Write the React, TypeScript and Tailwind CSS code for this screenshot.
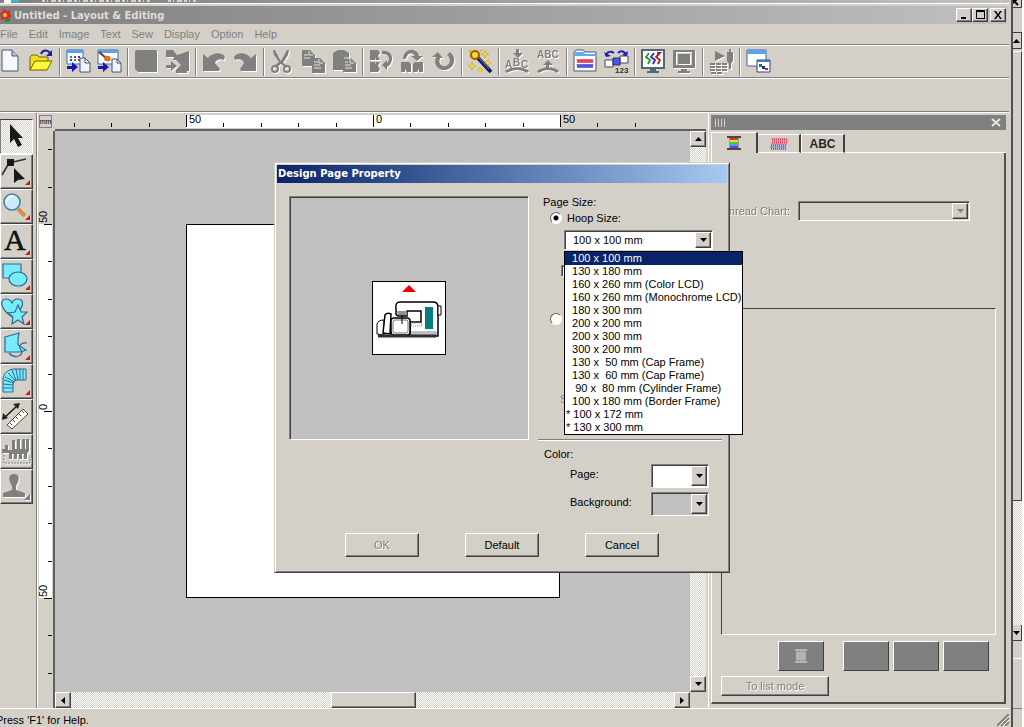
import React from 'react';

const raised =
  'border border-t-white border-l-white border-r-[#404040] border-b-[#404040] shadow-[inset_-1px_-1px_0_#808080] bg-[#d4d0c8]';
const sunken =
  'border border-t-[#808080] border-l-[#808080] border-r-white border-b-white shadow-[inset_1px_1px_0_#404040]';
const dither = 'bg-[repeating-conic-gradient(#ffffff_0_25%,#d4d0c8_0_50%)] bg-[length:2px_2px]';

const Rule = () => <div className="h-0.5 shrink-0 border-t border-[#808080] border-b border-b-white" />;

type ArrowProps = { dir: 'up' | 'down' | 'left' | 'right'; color?: string };

const arrowPoints = {
  up: '0,4 7,4 3.5,0',
  down: '0,0 7,0 3.5,4',
  left: '4,0 4,7 0,3.5',
  right: '0,0 0,7 4,3.5',
};

const Arrow = ({ dir, color = '#000' }: ArrowProps) => {
  const wide = dir === 'up' || dir === 'down';
  return (
    <svg width={wide ? 7 : 4} height={wide ? 4 : 7} aria-hidden="true">
      <polygon points={arrowPoints[dir]} fill={color} />
    </svg>
  );
};

const ScrollButton = ({ dir }: ArrowProps) => (
  <button aria-label={`Scroll ${dir}`} className={`flex h-4 w-4 shrink-0 items-center justify-center ${raised}`}>
    <Arrow dir={dir} />
  </button>
);

/* ---------- toolbar ---------- */

const colorIcons: Record<string, React.ReactNode> = {
  New: (
    <g>
      <path d="M4 1h10l6 6v15H4z" fill="#f4f8ff" stroke="#44547c" />
      <path d="M14 1v6h6" fill="#b8c4e0" stroke="#44547c" />
    </g>
  ),
  Open: (
    <g>
      <path d="M1 21V8l2-2h5l2 2h9v4" fill="#f0e020" stroke="#706000" />
      <path d="M1 21l5-9h17l-5 9z" fill="#fff838" stroke="#706000" />
      <path d="M12 5c2-5 7-4 9-1" fill="none" stroke="#2020a0" strokeWidth="2" />
      <path d="M23 1v6h-6z" fill="#2020a0" />
    </g>
  ),
  'Import Design': (
    <g>
      <path d="M1 1h16v14H1z" fill="#fff" stroke="#3868b0" />
      <path d="M1 1h16v3H1z" fill="#58a0f0" />
      <path d="M4 7h2v2H4zM8 10h2v2H8z" fill="#20a020" />
      <path d="M8 7h2v2H8zM12 10h2v2h-2z" fill="#d02020" />
      <path d="M12 7h2v2h-2zM4 10h2v2H4z" fill="#2040d0" />
      <path d="M14 9h5l5 5v9H14z" fill="#eef4ff" stroke="#44547c" />
      <path d="M19 9v5h5" fill="none" stroke="#44547c" />
      <path d="M1 17h5v-4l6 5-6 5v-3H1z" fill="#1818b0" />
    </g>
  ),
  'Import Image': (
    <g>
      <path d="M1 1h20v14H1z" fill="#fff" stroke="#3868b0" />
      <path d="M1 1h20v3H1z" fill="#58a0f0" />
      <path d="M2 3l7 6" stroke="#703010" strokeWidth="2" />
      <path d="M8 7c5-1 7 2 5 5-2 1-5 0-6-1z" fill="#e07020" />
      <path d="M15 10h5l4 4v9h-9z" fill="#eef4ff" stroke="#44547c" />
      <path d="M20 10v4h4" fill="none" stroke="#44547c" />
      <path d="M1 17h5v-4l6 5-6 5v-3H1z" fill="#1818b0" />
    </g>
  ),
  Wizard: (
    <g>
      <path d="M10 9l13 14" stroke="#181850" strokeWidth="4" />
      <path d="M11 9l10 11" stroke="#7878c8" strokeWidth="1" />
      <circle cx="7" cy="6" r="4" fill="#f8d828" stroke="#a05c00" strokeWidth="2" />
      <path
        d="M17 1l1 3 3 1-3 1-1 3-1-3-3-1 3-1zM4 13l1 3 3 1-3 1-1 3-1-3-3-1 3-1zM20 11l1 2 2 1-2 1-1 2-1-2-2-1 2-1zM12 18l1 2 2 1-2 1-1 2-1-2-2-1 2-1zM1 1h2v2H1zM12 1h2v1h-2z"
        fill="#f8e030"
        stroke="#c89800"
        strokeWidth=".5"
      />
    </g>
  ),
  'Design Library': (
    <g>
      <path d="M1 22V3l2-2h7l2 2h11v19z" fill="#fff" stroke="#405878" />
      <path d="M2 3h9l1 2h11v2H2z" fill="#60a8f0" />
      <path d="M4 10l1 4 1-4 1 4 1-4 1 4 1-4 1 4 1-4 1 4 1-4 1 4 1-4 1 4 1-4 1 4 1-4" fill="none" stroke="#e03050" />
      <path d="M4 15l1 4 1-4 1 4 1-4 1 4 1-4 1 4 1-4 1 4 1-4 1 4 1-4 1 4 1-4 1 4 1-4" fill="none" stroke="#4040d0" />
    </g>
  ),
  'Sewing Order': (
    <g>
      <path d="M2 7c1-5 5-5 8-3M14 4c3-3 7-2 8 3" fill="none" stroke="#2020b0" strokeWidth="2" />
      <path d="M0 3l2 5 5-1zM24 2l-1 6-5-2z" fill="#2020b0" />
      <path d="M1 11h8v7H1z" fill="#fff" stroke="#445" />
      <path d="M16 7h8v7h-8z" fill="#fff" stroke="#445" />
      <path d="M9 9h7v7H9z" fill="#4858e0" stroke="#223090" />
      <text x="11" y="24" fontSize="8" fontWeight="bold" fill="#303030">123</text>
    </g>
  ),
  Preview: (
    <g>
      <path d="M1 1h22v18H1z" fill="#fff" stroke="#506878" strokeWidth="2" />
      <path d="M9 20h6v2h3v2H6v-2h3z" fill="#506878" />
      <path d="M8 4l-3 4 4 3-2 4" fill="none" stroke="#18a018" strokeWidth="1.8" />
      <path d="M13 4l-3 4 4 3-2 4" fill="none" stroke="#2828c0" strokeWidth="1.8" />
      <path d="M16 4l3 0-4 4 4 3-2 4" fill="none" stroke="#c01818" strokeWidth="1.8" />
    </g>
  ),
  'Reference Window': (
    <g>
      <path d="M1 1h19v16H1z" fill="#fff" stroke="#3868a8" />
      <path d="M1 1h19v4H1z" fill="#60a0f0" />
      <path d="M11 11h13v12H11z" fill="#fff" stroke="#304878" />
      <path d="M11 11h13v2H11z" fill="#4078c8" />
      <path d="M13 15h3v3h-3z" fill="#109010" />
      <path d="M16 17h3v3h-3z" fill="#2020b0" />
      <path d="M19 19h3v2h-3z" fill="#c02020" />
    </g>
  ),
};

const grayIcons: Record<string, React.ReactNode> = {
  Save: <path d="M1 2l2-1h19l1 1v21H4l-3-3z" />,
  'Write to Card': (
    <path d="M1 1h7l4 5 12-4v20h-2v2H11v-3l5-5-5-5H8l1-3H3L1 8zM1 16h5v-4l6 5-6 5v-3H1z" />
  ),
  Undo: <path d="M1 5l5 4c5-6 14-6 17-1l-1 3c-4-2-8 0-9 3l5 6-1 2H1z" />,
  Redo: <path d="M23 5l-5 4C13 3 4 3 1 8l1 3c4-2 8 0 9 3l-4 6 1 2h15z" />,
  Cut: (
    <g>
      <path d="M3 1l2 0 6 11 6-11h2l-1 5-5 8 5 3-2 2-5-4-5 4-2-2 5-4-5-7z" />
      <circle cx="5" cy="20" r="3" fill="none" stroke="#808080" strokeWidth="2" />
      <circle cx="17" cy="20" r="3" fill="none" stroke="#808080" strokeWidth="2" />
    </g>
  ),
  Copy: (
    <g>
      <path d="M1 1h8l5 5v11H1zM11 9h8l5 5v10H11z" />
      <path d="M3 6h4M3 9h6M8 2v4h4M13 13h4M13 16h6M13 19h7M18 10v4h4" stroke="#e8e6e0" fill="none" />
    </g>
  ),
  Paste: (
    <g>
      <path d="M1 4l5-3h6l5 3v5h2l5 5v9H11v-2H1z" />
      <path d="M12 9h6v5h4M13 13h3M13 16h6M13 19h7" stroke="#e8e6e0" fill="none" />
    </g>
  ),
  'Flip Vertical': (
    <g>
      <path d="M1 1h8l2 3-2 3 2 4H7L6 8v3H1zM1 13h5v3l1-3h4l-2 4 2 3-2 3H1z" />
      <path d="M13 2c7-1 11 4 10 9-1 4-3 6-5 7v3l-5-5 5-5v3c4-4 2-9-5-9z" />
    </g>
  ),
  'Flip Horizontal': (
    <g>
      <path d="M1 13h8l2 2v8H7l-2-3v3H1zM23 13h-8l-2 2v8h4l2-3v3h4z" />
      <path d="M3 10C3 4 8 0 13 1c4 1 6 3 6 6h4l-6 5-6-5h4c-3-5-8-3-9 3z" />
    </g>
  ),
  Rotate: <path d="M1 8l6-5 5 6H9c-2 6 2 9 6 8 5-2 5-8 1-11l3-3c7 5 5 16-4 18C7 22 2 15 5 8z" />,
  'Fit Text': (
    <g>
      <path d="M11 0h3v4h4l-5 5-5-5h3zM0 22c7-5 18-5 24 0l-2 2c-6-4-14-4-20 0z" />
      <text x="0" y="19" fontSize="10" fontWeight="bold">A</text>
      <text x="8" y="17" fontSize="10" fontWeight="bold">B</text>
      <text x="16" y="19" fontSize="10" fontWeight="bold">C</text>
    </g>
  ),
  'Release Text': (
    <g>
      <text x="1" y="9" fontSize="10" fontWeight="bold">ABC</text>
      <path d="M12 11l5 5h-4v4h-3v-4H7zM1 22c7-5 16-5 22 0l-2 2c-6-4-12-4-18 0z" />
    </g>
  ),
  'Stitch Simulator': (
    <g>
      <path fillRule="evenodd" d="M1 1h22v18H1zM4 3v13h16V3z" />
      <path d="M6 5h12v10H6zM9 20h6v2h3v2H6v-2h3z" />
    </g>
  ),
  'Sew Check': (
    <g>
      <path d="M6 2l10 5-10 5zM18 3h2V0h2v3h2v9l-2 3v5h-2v-5l-2-3z" />
      <path d="M1 15h17M1 18h17M1 21h17M2 24h12" stroke="#808080" strokeWidth="2" strokeDasharray="5 1" />
    </g>
  ),
};

const toolbarGroups = [
  ['New', 'Open'],
  ['Import Design', 'Import Image'],
  ['Save', 'Write to Card'],
  ['Undo', 'Redo'],
  ['Cut', 'Copy', 'Paste'],
  ['Flip Vertical', 'Flip Horizontal', 'Rotate'],
  ['Wizard'],
  ['Fit Text', 'Release Text'],
  ['Design Library', 'Sewing Order'],
  ['Preview', 'Stitch Simulator'],
  ['Sew Check'],
  ['Reference Window'],
];

const Toolbar = () => (
  <div className="-ml-[5px] flex h-[31px] shrink-0 items-center">
    {toolbarGroups.map((group, i) => (
      <React.Fragment key={group[0]}>
        {i > 0 && <div className="mx-0.5 h-7 w-0.5 border-r border-l border-r-white border-l-[#808080]" />}
        {group.map((name) => (
          <button key={name} aria-label={name} className="flex h-7 w-[31px] items-center justify-center">
            {colorIcons[name] ? (
              <svg viewBox="0 0 25 25" className="h-[25px] w-[25px]">{colorIcons[name]}</svg>
            ) : (
              <svg viewBox="0 0 25 25" className="h-[25px] w-[25px] fill-[#808080] drop-shadow-[1px_1px_0_#ffffff]">
                {grayIcons[name]}
              </svg>
            )}
          </button>
        ))}
      </React.Fragment>
    ))}
  </div>
);

/* ---------- tool box ---------- */

const Corner = () => <path d="M29 25v5h-5z" fill="#d81818" />;

const tools: { name: string; icon: React.ReactNode }[] = [
  {
    name: 'Select',
    icon: <path d="M9 4v19l4-4 4 8 4-2-4-7h5z" fill="#181818" />,
  },
  {
    name: 'Edit Points',
    icon: (
      <g>
        <path d="M1 20L8 8l17-4" fill="none" stroke="#303030" strokeWidth="1.5" />
        <path d="M6 4h7v7H6zM13 13v15l4-3 7-1z" fill="#181818" />
        <Corner />
      </g>
    ),
  },
  {
    name: 'Zoom',
    icon: (
      <g>
        <path d="M17 19l7 7" stroke="#d89038" strokeWidth="4" />
        <circle cx="11" cy="12" r="8" fill="#c8ecfc" stroke="#4878a0" strokeWidth="1.5" />
        <path d="M6 12c0-4 3-6 6-6" stroke="#fff" strokeWidth="2" fill="none" />
        <Corner />
      </g>
    ),
  },
  {
    name: 'Text Tool',
    icon: (
      <g>
        <text x="3" y="25" fontSize="30" fontFamily="Liberation Serif, serif" fill="#101010" stroke="#101010" strokeWidth=".6">A</text>
        <Corner />
      </g>
    ),
  },
  {
    name: 'Shapes',
    icon: (
      <g fill="#78ecf8" stroke="#306898" strokeWidth="1.2">
        <path d="M2 4h18v14H2z" />
        <ellipse cx="17" cy="19" rx="9" ry="7" />
        <g stroke="none"><Corner /></g>
      </g>
    ),
  },
  {
    name: 'Figures',
    icon: (
      <g fill="#78ecf8" stroke="#306898" strokeWidth="1.2">
        <path d="M11 22C-2 13-1 4 5 4c3 0 5 2 6 4 1-3 3-4 6-4 6 0 6 7 0 13z" />
        <path d="M17 10l3 7 6 0-5 5 2 7-6-4-6 4 1-7-5-4 7-1z" />
        <g stroke="none"><Corner /></g>
      </g>
    ),
  },
  {
    name: 'Outline',
    icon: (
      <g fill="#78ecf8" stroke="#306898" strokeWidth="1.2">
        <path d="M4 7l14-4-1 6 0 6 8 5-6 2H4z" />
        <path d="M26 13c-6-1-9 3-6 7 4 5-6 10-12 3" fill="none" />
        <g stroke="none"><Corner /></g>
      </g>
    ),
  },
  {
    name: 'Manual Punch',
    icon: (
      <g>
        <path d="M2 27V16C2 8 7 4 14 4h11v11h-8c-3 0-5 1-5 4v8z" fill="#78ecf8" stroke="#306898" />
        <path d="M2 23h10M2 19l10 1M3 15l10 3M4 12l10 5M7 8l8 8M11 5l4 10M15 4l2 11M19 4v11M22 4v11" stroke="#306898" fill="none" />
        <Corner />
      </g>
    ),
  },
  {
    name: 'Measure',
    icon: (
      <g>
        <path d="M3 18L17 5" stroke="#181818" strokeWidth="1.5" />
        <path d="M1 20l1-7 5 5zM19 3l-7 1 5 5z" fill="#182818" />
        <path d="M6 25l16-16 5 5-16 15z" fill="#fff" stroke="#484848" />
        <path d="M9 23l2 2M12 20l2 2M15 17l2 2M18 14l2 2M21 11l2 2" stroke="#484848" />
      </g>
    ),
  },
  {
    name: 'Split Stitch',
    icon: (
      <g className="fill-[#808080] drop-shadow-[1px_1px_0_#ffffff]">
        <path d="M1 14h3v-4h3v5h4V5h3v9h2V4h3v10h2V4h3v10h1V4h3v12l-2 3v5h-3v-5h-2v5h-3v-5h-2v5h-3v-5h-2v5H8v-6H1z" />
        <path d="M3 20v8h26v-6" fill="none" stroke="#808080" strokeDasharray="2 1" />
      </g>
    ),
  },
  {
    name: 'Stamp',
    icon: (
      <g className="fill-[#808080] drop-shadow-[1px_1px_0_#ffffff]">
        <path d="M13 4c6 0 6 6 2 12v4l9 3v4H2v-4l9-3v-4C7 10 7 4 13 4zM29 24v6h-6z" />
      </g>
    ),
  },
];

const ToolBox = () => (
  <div className="w-[37px] shrink-0 border-r border-[#808080] pt-1.5">
    <div className="flex w-[33px] flex-col">
      {tools.map((tool, i) => (
        <button
          key={tool.name}
          aria-label={tool.name}
          className={`h-[35px] ${i === 0 ? `border border-t-[#404040] border-l-[#808080] border-r-white border-b-white ${dither}` : raised}`}
        >
          <svg viewBox="0 0 31 33" className="h-[33px] w-[31px]">{tool.icon}</svg>
        </button>
      ))}
    </div>
  </div>
);

/* ---------- canvas ---------- */

const ticks = Array.from({ length: 16 }, (_, i) => i - 3);

const HorizontalRuler = () => (
  <svg className="block h-4 w-full text-[11px]" aria-label="Horizontal ruler">
    <rect x="131" y="2" width="374" height="13" fill="#fff" />
    {ticks.map((t) => {
      const big = t % 5 === 0;
      return <rect key={t} x={Math.round(131 + 37.4 * t)} y={big ? 2 : 10} width="1" height={big ? 12 : 4} />;
    })}
    <text x="134" y="10">50</text>
    <text x="321" y="10">0</text>
    <text x="508" y="10">50</text>
  </svg>
);

const VerticalRuler = () => (
  <svg className="block h-full w-4 text-[11px]" aria-label="Vertical ruler">
    <rect x="1" y="93" width="13" height="374" fill="#fff" />
    {ticks.map((t) => {
      const big = t % 5 === 0;
      return <rect key={t} x={big ? 6 : 10} y={Math.round(93 + 37.4 * t)} width={big ? 8 : 4} height="1" />;
    })}
    <text transform="translate(9 92) rotate(-90)">50</text>
    <text transform="translate(9 279) rotate(-90)">0</text>
    <text transform="translate(9 466) rotate(-90)">50</text>
  </svg>
);

const Workspace = () => (
  <div className="flex min-w-0 flex-1 flex-col border-l border-white pr-0.5">
    <div className="flex h-[18px] shrink-0">
      <div className="flex w-[17px] shrink-0 items-start pt-0.5 pl-px">
        <button className="flex h-[13px] w-[13px] items-center justify-center border border-[#808080] text-[7px] leading-[10px]">
          mm
        </button>
      </div>
      <div className="min-w-0 flex-1 border-b-2 border-[#606060]">
        <HorizontalRuler />
      </div>
    </div>
    <div className="flex min-h-0 flex-1">
      <div className="w-[17px] shrink-0 border-r-2 border-[#606060]">
        <VerticalRuler />
      </div>
      <div className="flex min-w-0 flex-1 flex-col">
        <div className="flex min-h-0 flex-1">
          <div className="relative min-w-0 flex-1 overflow-hidden bg-[#c0c0c0]">
            <div className="absolute top-[93px] left-[131px] h-[374px] w-[374px] border border-black bg-white" />
          </div>
          <div className={`flex w-4 shrink-0 flex-col justify-between ${dither}`}>
            <ScrollButton dir="up" />
            <ScrollButton dir="down" />
          </div>
        </div>
        <div className="flex h-4 shrink-0">
          <div className={`flex min-w-0 flex-1 ${dither}`}>
            <ScrollButton dir="left" />
            <div className="flex-[260]" />
            <div className={`h-4 w-[85px] ${raised}`} />
            <div className="flex-[258]" />
            <ScrollButton dir="right" />
          </div>
          <div className="w-4" />
        </div>
      </div>
    </div>
  </div>
);

/* ---------- side panel ---------- */

const SidePanel = () => (
  <aside className="flex w-[301px] shrink-0 flex-col border-l border-white pt-0.5 pr-[3px] pb-1 pl-0.5">
    <div className="flex h-[15px] shrink-0 items-center justify-between bg-[#808080] px-1">
      <div className="flex gap-px">
        {[0, 1, 2, 3].map((n) => (
          <span key={n} className="h-2 w-0.5 border-l border-[#d4d0c8]" />
        ))}
      </div>
      <button aria-label="Close panel">
        <svg width="11" height="9"><path d="M1 1l8 7M9 1L1 8" stroke="#e8e6e0" strokeWidth="2" /></svg>
      </button>
    </div>
    <div className="mt-0.5 flex h-[21px] shrink-0 items-end">
      <button
        aria-label="Thread colors"
        className="flex h-[21px] w-[47px] items-center justify-center border-t border-r-2 border-l border-white border-r-[#404040]"
      >
        <svg width="16" height="16">
          <path d="M1 2h14M1 14h14" stroke="#484840" strokeWidth="2" />
          <path d="M4 3v10M12 3v10" stroke="#686860" />
          <path d="M4 3h8v2H4z" fill="#e03030" />
          <path d="M4 5h8v2H4z" fill="#f0e020" />
          <path d="M4 7h8v2H4z" fill="#30d040" />
          <path d="M4 9h8v2H4z" fill="#30b0f0" />
          <path d="M4 11h8v2H4z" fill="#8030e0" />
        </svg>
      </button>
      <button
        aria-label="Sewing attributes"
        className="flex h-[19px] w-[43px] items-center justify-center border-t border-r-2 border-b border-white border-r-[#404040] border-b-white"
      >
        <svg width="18" height="14" fill="none">
          <path d="M2 1l1 3-1 3M4 1l1 3-1 3M6 1l1 3-1 3M8 1l1 3-1 3M10 1l1 3-1 3M12 1l1 3-1 3M14 1l1 3-1 3M16 1l1 3-1 3" stroke="#e84060" />
          <path d="M2 7l-1 3 1 3M4 7l-1 3 1 3M6 7l-1 3 1 3M8 7l-1 3 1 3M10 7l-1 3 1 3M12 7l-1 3 1 3M14 7l-1 3 1 3M16 7l-1 3 1 3" stroke="#5060d8" />
        </svg>
      </button>
      <button className="h-[19px] w-11 border-t border-r-2 border-b border-l border-white border-r-[#404040] border-b-white text-xs leading-4 font-bold text-[#282828]">
        ABC
      </button>
      <div className="flex-1 border-b border-white" />
    </div>
    <div className="flex min-h-0 flex-1 flex-col border-r-2 border-b-2 border-l border-l-white border-r-[#505050] border-b-[#505050] pr-2 pb-1.5 pl-[9px]">
      <div className="mt-12 mr-[26px] flex items-center justify-end gap-2 text-[#808080]">
        <label htmlFor="thread-chart" className="text-[11px] drop-shadow-[1px_1px_0_#ffffff]">Thread Chart:</label>
        <div className={`relative h-5 w-[172px] ${sunken}`}>
          <select id="thread-chart" disabled className="h-full w-full appearance-none" />
          <span className={`pointer-events-none absolute top-px right-px flex h-4 w-4 items-center justify-center ${raised}`}>
            <Arrow dir="down" color="#808080" />
          </span>
        </div>
      </div>
      <div className="mt-[87px] min-h-0 flex-1 border border-t-[#404040] border-l-[#404040] border-r-white border-b-white" />
      <div className="mt-1.5 mr-[7px] flex justify-end gap-1">
        <button aria-label="Spool" className="mr-[15px] flex h-[30px] w-[46px] items-center justify-center border border-t-white border-l-white border-r-[#404040] border-b-[#404040] bg-[#808080]">
          <svg width="12" height="14" fill="none" stroke="#e8e6e0">
            <path d="M0 1h12M0 13h12" />
            <path d="M1 3h10M1 5h10M1 7h10M1 9h10M1 11h10" strokeDasharray="1 1" />
            <path d="M2 4h9M2 6h9M2 8h9M2 10h9" strokeDasharray="1 1" />
          </svg>
        </button>
        {[1, 2, 3].map((n) => (
          <button
            key={n}
            aria-label={`Color ${n}`}
            className="h-[30px] w-[46px] border border-t-white border-l-white border-r-[#404040] border-b-[#404040] bg-[#808080]"
          />
        ))}
      </div>
      <button className={`mt-[5px] h-5 w-[108px] text-[11px] text-[#808080] ${raised}`}>
        <span className="drop-shadow-[1px_1px_0_#ffffff]">To list mode</span>
      </button>
    </div>
  </aside>
);

/* ---------- dialog ---------- */

const hoops = [
  '  100 x 100 mm',
  '  130 x 180 mm',
  '  160 x 260 mm (Color LCD)',
  '  160 x 260 mm (Monochrome LCD)',
  '  180 x 300 mm',
  '  200 x 200 mm',
  '  200 x 300 mm',
  '  300 x 200 mm',
  '  130 x  50 mm (Cap Frame)',
  '  130 x  60 mm (Cap Frame)',
  '   90 x  80 mm (Cylinder Frame)',
  '  100 x 180 mm (Border Frame)',
  '* 100 x 172 mm',
  '* 130 x 300 mm',
];

const radio =
  'h-3 w-3 appearance-none rounded-full border border-t-[#606060] border-l-[#606060] border-r-white border-b-white bg-white checked:bg-[radial-gradient(circle,#000_2px,#fff_3px)]';

const MachineIcon = () => (
  <svg width="74" height="74" className="border border-black bg-white" aria-label="Embroidery machine">
    <path d="M29 10l7-7 7 7z" fill="#f00000" />
    <path d="M23 27q-1-7 4-7h33q5 0 5 5v29H37V40h11V29H34v5h-8q-3 0-3-3z" fill="#fff" stroke="#000" strokeWidth="1.5" />
    <path d="M24 29h10v4H25z" fill="#909090" />
    <path d="M38 49h26v4H38z" fill="#c0c0c0" />
    <path d="M52 25h8v22h-8z" fill="#008080" />
    <path d="M65 24h3v9h-3z" fill="#fff" stroke="#000" />
    <path d="M38 41h11v3H38z" fill="none" stroke="#909090" strokeDasharray="1 1" />
    <path d="M4 52V42q1-4 7-4v15z" fill="#fff" stroke="#000" />
    <path d="M10 51l2-18q2-3 6-1l-1 20z" fill="#fff" stroke="#000" strokeWidth="1.5" />
    <rect x="18" y="36" width="19" height="17" rx="3" fill="#fff" stroke="#000" strokeWidth="1.5" />
    <rect x="20" y="38" width="15" height="13" rx="2" fill="none" stroke="#707070" />
    <path d="M29 33v9" stroke="#000" />
    <path d="M5 54h58" stroke="#303030" strokeWidth="3" />
  </svg>
);

const ColorSelect = ({ label, id, fill }: { label: string; id: string; fill: string }) => (
  <div className="flex h-7 items-center pr-[17px] pl-8">
    <label htmlFor={id} className="flex-1 pb-1">{label}</label>
    <div className={`relative h-6 w-[58px] ${sunken} ${fill}`}>
      <select id={id} className="h-full w-full appearance-none" />
      <span className={`pointer-events-none absolute top-px right-px flex h-5 w-4 items-center justify-center ${raised}`}>
        <Arrow dir="down" />
      </span>
    </div>
  </div>
);

const PageDialog = () => (
  <div
    role="dialog"
    aria-label="Design Page Property"
    className="absolute top-[162px] left-[274px] flex w-[456px] flex-col border border-t-[#d4d0c8] border-l-[#d4d0c8] border-r-[#404040] border-b-[#404040] bg-[#d4d0c8] p-0.5 text-[11px] leading-4 shadow-[inset_1px_1px_0_#ffffff,inset_-1px_-1px_0_#808080]"
  >
    <h2 className="h-[18px] bg-gradient-to-r from-[#0a246a] to-[#a6caf0] pl-px font-['DejaVu_Sans',sans-serif] text-[10px] leading-[17px] font-bold text-white">
      Design Page Property
    </h2>
    <div className="flex pt-[13px] pl-3">
      <div className={`flex h-[244px] w-60 shrink-0 items-center justify-center bg-[#c0c0c0] ${sunken}`}>
        <MachineIcon />
      </div>
      <div className="ml-[9px] w-[188px]">
        <div className="pl-[5px] leading-3">Page Size:</div>
        <div className="flex items-center gap-[5px] pb-px pl-3">
          <input type="radio" name="size" id="hoop" defaultChecked className={radio} />
          <label htmlFor="hoop" className="leading-5">Hoop Size:</label>
        </div>
        <div className={`relative mt-px ml-[26px] h-5 w-[149px] bg-white ${sunken}`}>
          <select aria-label="Hoop size" className="block h-full w-full appearance-none pl-2 leading-4">
            <option>100 x 100 mm</option>
          </select>
          <span className={`pointer-events-none absolute top-px right-px flex h-4 w-4 items-center justify-center ${raised}`}>
            <Arrow dir="down" />
          </span>
          <ul
            role="listbox"
            aria-label="Hoop sizes"
            className="absolute top-5 -left-px z-10 w-[179px] border border-black bg-white leading-[13px] whitespace-pre"
          >
            {hoops.map((hoop, i) => (
              <li
                key={hoop}
                role="option"
                aria-selected={i === 0}
                className={i === 0 ? 'bg-[#0a246a] pl-px text-white' : 'pl-px'}
              >
                {hoop}
              </li>
            ))}
          </ul>
        </div>
        <input
          type="checkbox"
          disabled
          aria-label="Rotate 90 degrees"
          className={`mt-[15px] ml-[23px] block h-3 w-3 appearance-none bg-white ${sunken}`}
        />
        <input type="radio" name="size" aria-label="Custom Size" className={`mt-9 ml-3 block ${radio}`} />
        <div className="mt-[66px] pl-[22px] text-[#808080]">S</div>
        <div className="mt-8 w-[184px]">
          <Rule />
        </div>
        <div className="pt-[5px] pl-1.5">Color:</div>
        <ColorSelect id="page-color" label="Page:" fill="bg-white" />
        <ColorSelect id="background-color" label="Background:" fill="bg-[#c0c0c0]" />
      </div>
    </div>
    <div className="mt-[15px] mb-[13px] flex justify-center gap-[46px]">
      <button disabled className={`h-6 w-[74px] text-[#808080] ${raised}`}>
        <span className="drop-shadow-[1px_1px_0_#ffffff]">OK</span>
      </button>
      <button className={`h-6 w-[74px] ${raised}`}>Default</button>
      <button className={`h-6 w-[74px] ${raised}`}>Cancel</button>
    </div>
  </div>
);

/* ---------- frame ---------- */

const windowButtons = [
  { name: 'Minimize', path: 'M2 7h5v2H2z', gap: '' },
  { name: 'Maximize', path: 'M1 0h9v9H1zM2 2v6h7V2z', gap: 'mr-0.5' },
  { name: 'Close', path: 'M1 1h2l2 3 2-3h2L6 5l3 4H7L5 6 3 9H1l3-4z', gap: '' },
];

const TitleBar = () => (
  <header className="flex h-[21px] shrink-0 border-t border-white pt-0.5 pr-0.5">
    <div className="flex flex-1 items-center bg-gradient-to-r from-[#808080] to-[#c0c0c0] pr-px">
      <svg width="12" height="14" aria-hidden="true">
        <path d="M4 1l3 2 3-1v4l2 2-3 2-1 3-3-2-4 1V8l-1-2 2-2z" fill="#e02828" />
        <circle cx="5" cy="7" r="2" fill="#f8d040" />
        <path d="M6 11l5 0-2 3H4z" fill="#209030" />
      </svg>
      <h1 className="flex-1 pl-0.5 font-['DejaVu_Sans',sans-serif] text-[10px] font-bold text-[#e0dcd4]">
        Untitled - Layout &amp; Editing
      </h1>
      {windowButtons.map((b) => (
        <button key={b.name} aria-label={b.name} className={`flex h-3.5 w-4 items-center justify-center ${raised} ${b.gap}`}>
          <svg width="10" height="10"><path d={b.path} fillRule="evenodd" /></svg>
        </button>
      ))}
    </div>
  </header>
);

const menus = ['File', 'Edit', 'Image', 'Text', 'Sew', 'Display', 'Option', 'Help'];

// edge of the window that lies behind this one
const BackWindowEdge = () => (
  <div className="flex w-[11px] shrink-0 flex-col border-r-2 border-white">
    <div className="h-2 border-r border-b border-[#404040]">
      <svg width="8" height="6"><path d="M0 3L5 -2M0 0l5 5" stroke="#000" strokeWidth="2" /></svg>
    </div>
    <div className="mt-6 border-t border-[#404040]" />
    <div className="flex h-4 items-center overflow-hidden border-r border-b border-[#404040]">
      <Arrow dir="up" />
    </div>
    <div className="mt-0.5 flex-[450] border-t border-r border-b border-white border-r-[#404040] border-b-[#404040]" />
    <div className={`flex-[125] ${dither}`} />
    <div className="flex h-4 items-center overflow-hidden border-r border-b border-[#404040]">
      <Arrow dir="down" />
    </div>
    <div className="mt-[17px] h-[50px] border-t border-white" />
    <div className="h-[19px] border-t border-[#808080]" />
  </div>
);

export default function App() {
  return (
    <div className="relative flex h-screen overflow-hidden bg-[#d4d0c8] font-['Liberation_Sans',Arial,sans-serif] text-[11px] text-black">
      <div className="flex min-w-0 flex-1 flex-col border-r-2 border-[#505050] pr-0.5">
        <div className="h-[3px] shrink-0 bg-gradient-to-r from-[#808080] to-[#c0c0c0]">
          <svg width="200" height="3" className="block" aria-hidden="true">
            <path d="M4 0h7v3H4z" fill="#fff" />
            <path d="M11 0h8v2h-8z" fill="#30c0d0" />
            <path d="M42 1h108M168 1h28" stroke="#d4d0c8" strokeWidth="2" strokeDasharray="3 2 1 3 5 2" />
          </svg>
        </div>
        <TitleBar />
        <nav className="flex h-5 shrink-0 items-center gap-[11px] text-[#808080]">
          {menus.map((m) => (
            <button key={m}>{m}</button>
          ))}
        </nav>
        <Rule />
        <Toolbar />
        <Rule />
        <div className="h-8 shrink-0" />
        <Rule />
        <main className="flex min-h-0 flex-1">
          <ToolBox />
          <Workspace />
          <SidePanel />
        </main>
        <footer className="flex h-[19px] shrink-0 items-center justify-between border-t border-white pt-1">
          <span className="-ml-1">Press 'F1' for Help.</span>
          <svg width="12" height="12" aria-hidden="true">
            <path d="M0 12L12 0M4 12l8-8M8 12l4-4" stroke="#808080" strokeWidth="2" />
            <path d="M2 12L12 2M6 12l6-6" stroke="#fff" />
          </svg>
        </footer>
      </div>
      <BackWindowEdge />
      <PageDialog />
    </div>
  );
}
